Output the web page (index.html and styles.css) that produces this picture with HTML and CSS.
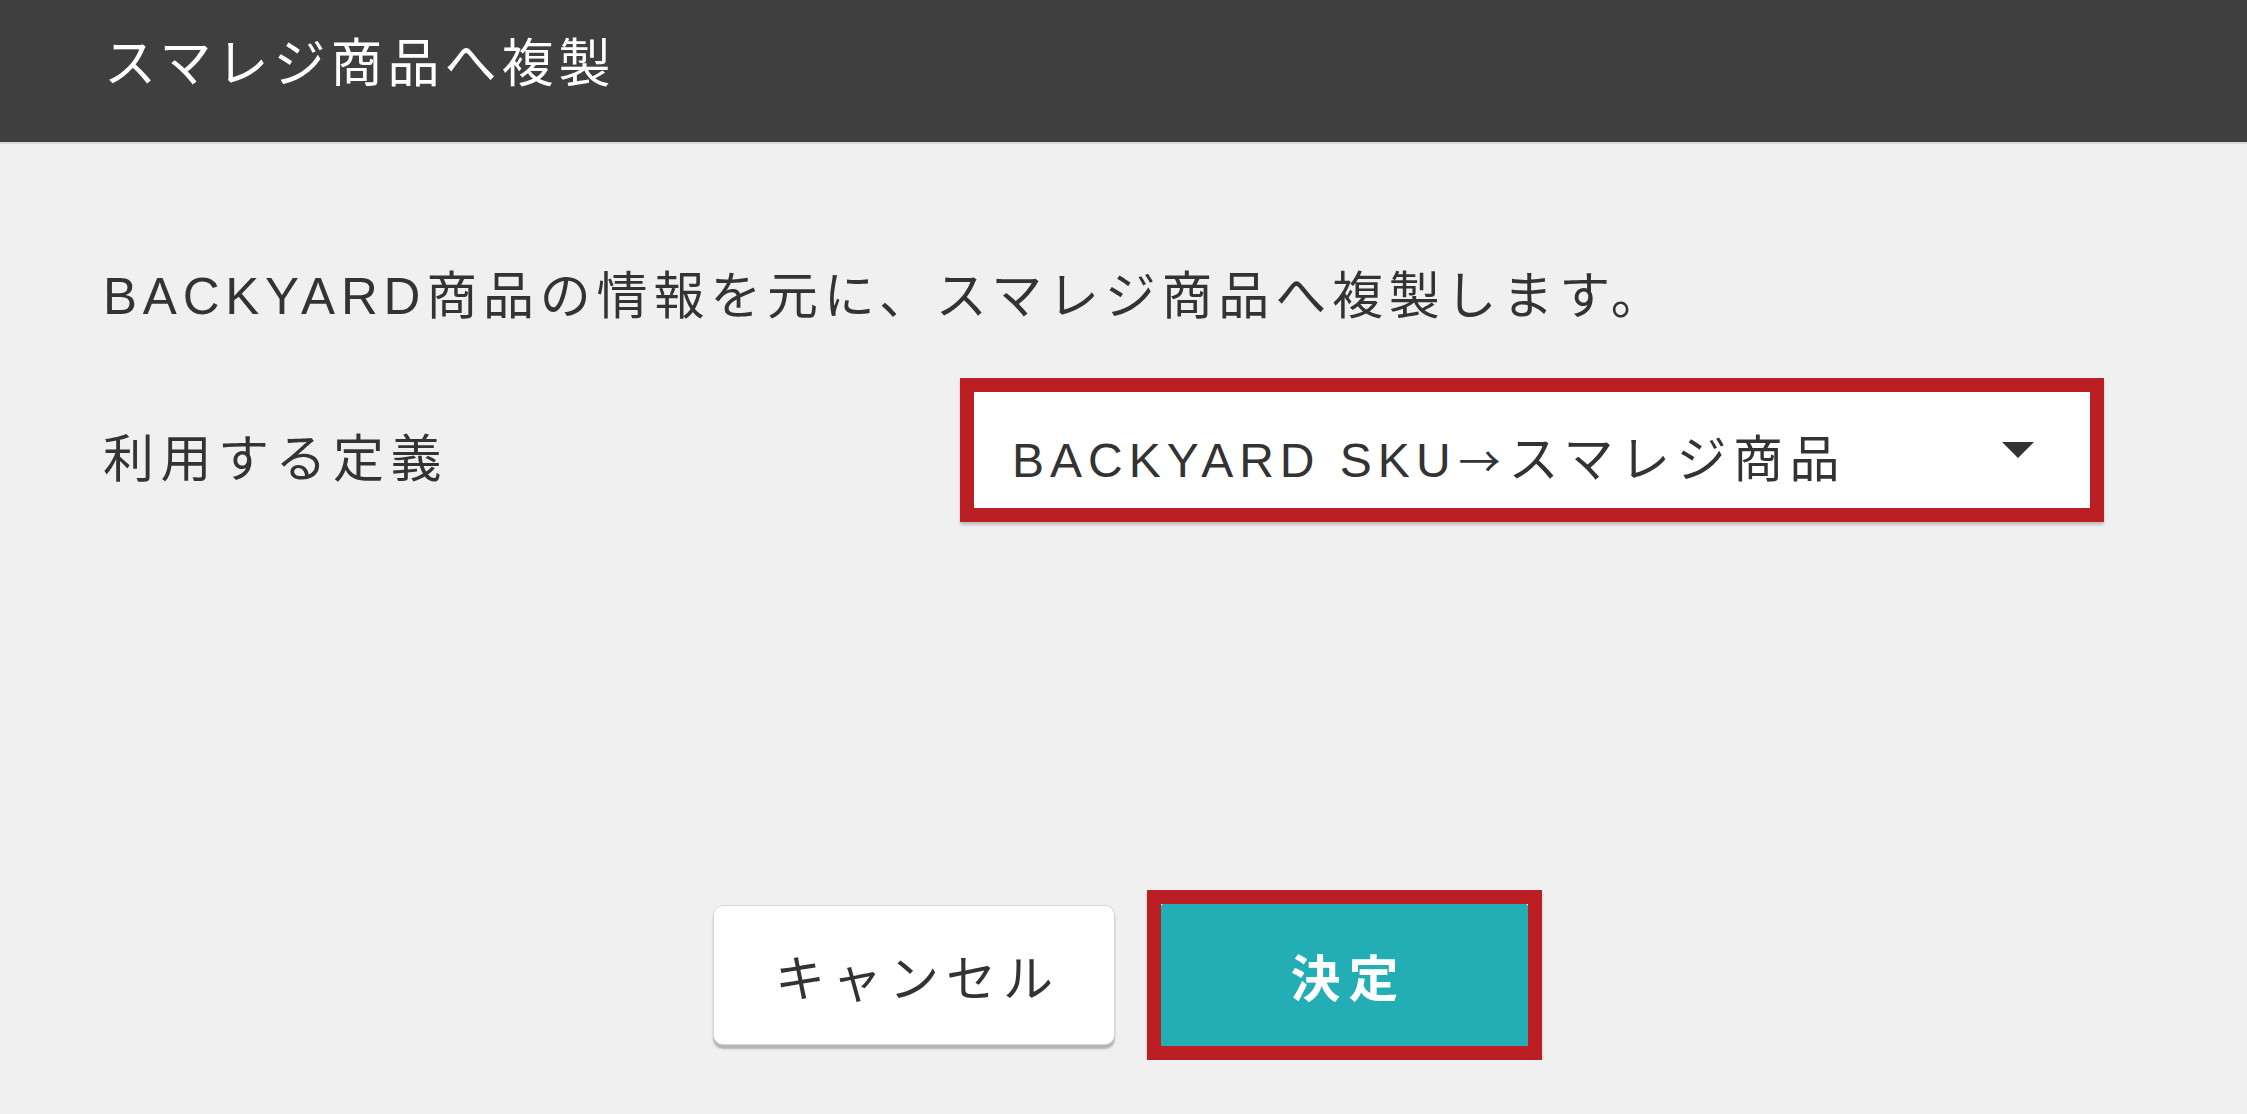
FILE: index.html
```html
<!DOCTYPE html>
<html lang="ja">
<head>
  <meta charset="UTF-8">
  <meta name="viewport" content="width=device-width, initial-scale=1.0">
  <title>スマレジ商品へ複製</title>
  <link rel="stylesheet" href="styles.css">
</head>
<body>
  <div class="header">
    <h1>スマレジ商品へ複製</h1>
  </div>

  <div class="content">
    <p class="desc">BACKYARD商品の情報を元に、スマレジ商品へ複製します。</p>

    <div class="row">
      <span class="label">利用する定義</span>
      <div class="mark">
        <div class="select">
          <span>BACKYARD SKU<span class="arrow">→</span><span class="jp">スマレジ商品</span></span>
          <span class="caret"></span>
        </div>
      </div>
    </div>

    <div class="buttons">
      <button class="btn-cancel">キャンセル</button>
      <div class="mark">
        <button class="btn-ok">決定</button>
      </div>
    </div>
  </div>
</body>
</html>
```

FILE: styles.css
```css
body {
  font-family: "Liberation Sans", "Noto Sans CJK JP", sans-serif;
  background-color: #f0f0f0;
  color: #333;
  margin: 0;
  padding: 0;
}
.header {
  height: 144px;
  background-color: #3f3f3f;
  border-bottom: 2px solid #d8d8d8;
  display: flex;
  align-items: center;
  padding: 0 0 24px 104px;
  box-sizing: border-box;
}
h1 {
  margin: 0;
  color: #fff;
  font-size: 52px;
  font-weight: normal;
  letter-spacing: 5px;
}
.content {
  padding: 0 103px;
}
.desc {
  margin: 118px 0 0;
  font-size: 51px;
  line-height: 70px;
  letter-spacing: 5.8px;
}
.row {
  display: grid;
  grid-template-columns: 857px 1144px;
  align-items: center;
  margin-top: 46px;
}
.label {
  font-size: 51px;
  letter-spacing: 6.5px;
  padding-top: 10px;
}
.mark {
  border: 14px solid #bb1e23;
  box-shadow: 0 3px 3px rgba(0, 0, 0, 0.2);
}
.select {
  height: 116px;
  background-color: #fff;
  display: flex;
  align-items: center;
  justify-content: space-between;
  padding: 10px 56px 0 38px;
  box-sizing: border-box;
  font-size: 48px;
  letter-spacing: 6px;
}
.arrow {
  font-family: "Noto Sans CJK JP", sans-serif;
  font-size: 42px;
  letter-spacing: 0;
  margin: 0 8px 0 2px;
}
.jp {
  font-size: 50px;
  letter-spacing: 6.5px;
}
.caret {
  width: 0;
  height: 0;
  border-left: 16px solid transparent;
  border-right: 16px solid transparent;
  border-top: 16px solid #333;
  margin-top: -10px;
}
.buttons {
  display: flex;
  justify-content: center;
  align-items: center;
  gap: 32px;
  margin-top: 368px;
  padding-left: 8px;
}
button {
  font-family: inherit;
  cursor: pointer;
}
.btn-cancel {
  width: 402px;
  height: 140px;
  background-color: #fff;
  color: #333;
  border: 1px solid #d6d6d6;
  border-radius: 10px;
  box-shadow: 0 4px 2px rgba(0, 0, 0, 0.25);
  font-size: 50px;
  letter-spacing: 7px;
  padding: 0 0 0 7px;
}
.btn-ok {
  display: block;
  width: 367px;
  height: 142px;
  background-color: #23adb4;
  color: #fff;
  border: none;
  border-radius: 3px 3px 0 0;
  font-size: 50px;
  font-weight: bold;
  letter-spacing: 8px;
  padding: 0 0 0 8px;
}
```
